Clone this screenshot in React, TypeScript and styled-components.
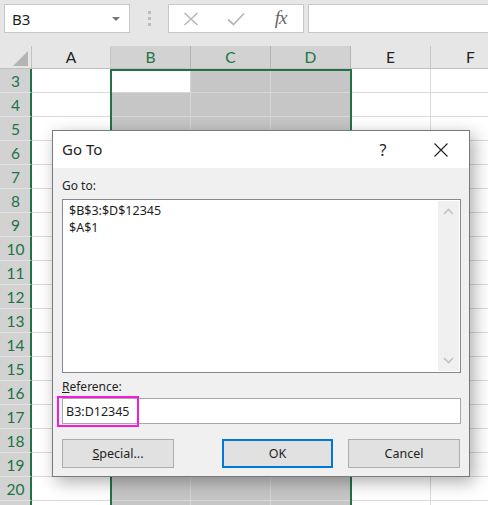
import React from 'react'
import styled, { createGlobalStyle } from 'styled-components'

const GREEN = '#217346'

const GlobalStyle = createGlobalStyle`
  html, body {
    margin: 0;
    padding: 0;
    background: #fff;
    overflow: hidden;
  }
  * {
    box-sizing: border-box;
  }
`

const Page = styled.div`
  position: relative;
  width: 488px;
  height: 505px;
  overflow: hidden;
  background: #fff;
  font-family: 'Noto Sans', 'Liberation Sans', sans-serif;
  color: #1e1e1e;
`

// ---- formula bar ----

const FormulaBar = styled.div`
  display: flex;
  align-items: flex-start;
  height: 46px;
  padding: 4px 0 0 4px;
  background: #e6e6e6;
`

const NameBox = styled.div`
  width: 126px;
  height: 29px;
  flex: none;
  display: flex;
  align-items: center;
  justify-content: space-between;
  padding: 0 9px 0 7px;
  background: #fff;
  border: 1px solid #c8c8c8;
  font-size: 15px;
`

const Caret = styled.span`
  width: 0;
  height: 0;
  border-left: 4px solid transparent;
  border-right: 4px solid transparent;
  border-top: 4px solid #777;
`

const Grip = styled.div`
  width: 38px;
  height: 29px;
  flex: none;
  display: flex;
  flex-direction: column;
  align-items: center;
  justify-content: center;
  gap: 3px;
`

const GripDot = styled.span`
  width: 3px;
  height: 3px;
  background: #bcbcbc;
`

const FxBox = styled.div`
  width: 136px;
  height: 29px;
  flex: none;
  display: flex;
  align-items: center;
  background: #fff;
  border: 1px solid #c8c8c8;
`

const FxSlot = styled.div`
  width: 45px;
  height: 100%;
  display: flex;
  align-items: center;
  justify-content: center;
`

const FxText = styled.span`
  font-family: 'Liberation Serif', 'DejaVu Serif', serif;
  font-style: italic;
  font-size: 19px;
  color: #666;
  letter-spacing: -1px;
  margin-top: -2px;
`

const FormulaInput = styled.div`
  flex: 1;
  height: 29px;
  margin: 0 -10px 0 4px;
  background: #fff;
  border: 1px solid #c8c8c8;
`

// ---- sheet ----

const columns = [
  { key: 'A', width: 79 },
  { key: 'B', width: 80 },
  { key: 'C', width: 80 },
  { key: 'D', width: 80 },
  { key: 'E', width: 80 },
  { key: 'F', width: 80 },
]
const selectedCols = ['B', 'C', 'D']
// rows 3..20 are labelled; the last one only peeks in at the bottom edge
const rows = Array.from({ length: 19 }, (_, i) => i + 3)
const lastRow = 20

const SheetWrap = styled.div`
  position: relative;
`

const Sheet = styled.div<{ $template: string }>`
  display: grid;
  grid-template-columns: ${({ $template }) => $template};
  grid-auto-rows: 24px;
  grid-template-rows: 23px;
  font-family: Lato, 'Liberation Sans', sans-serif;
  font-size: 15.5px;
`

const Corner = styled.div`
  background: #e6e6e6;
  border-right: 1px solid #c0c0c0;
  border-bottom: 1px solid #c0c0c0;
  display: flex;
  align-items: flex-end;
  justify-content: flex-end;
  padding: 0 3px 2px 0;
`

const ColHeader = styled.div<{ $sel?: boolean }>`
  display: flex;
  align-items: center;
  justify-content: center;
  background: ${({ $sel }) => ($sel ? '#d2d2d2' : '#e6e6e6')};
  color: ${({ $sel }) => ($sel ? GREEN : '#222')};
  border-right: 1px solid ${({ $sel }) => ($sel ? '#b4b4b4' : '#c8c8c8')};
  border-bottom: 1px solid #c0c0c0;
`

const RowHeader = styled.div<{ $sel?: boolean }>`
  display: flex;
  align-items: center;
  justify-content: center;
  background: ${({ $sel }) => ($sel ? '#d2d2d2' : '#e6e6e6')};
  color: ${({ $sel }) => ($sel ? GREEN : '#222')};
  border-right: 2px solid ${({ $sel }) => ($sel ? GREEN : '#c0c0c0')};
  border-bottom: 1px solid #e4e4e4;
  padding-left: 1px;
`

const Cell = styled.div<{ $sel?: boolean; $active?: boolean }>`
  background: ${({ $sel, $active }) => ($active ? '#fff' : $sel ? '#c6c6c6' : '#fff')};
  border-right: 1px solid ${({ $sel }) => ($sel ? '#d6d6d6' : '#dadada')};
  border-bottom: 1px solid ${({ $sel }) => ($sel ? '#d6d6d6' : '#dadada')};
`

const SelectionOutline = styled.div`
  position: absolute;
  left: 110px;
  top: 23px;
  width: 242px;
  height: 600px;
  border: 2px solid ${GREEN};
  border-bottom: none;
  pointer-events: none;
`

// ---- dialog ----

const Dialog = styled.div`
  position: absolute;
  left: 52px;
  top: 130px;
  width: 418px;
  height: 347px;
  display: flex;
  flex-direction: column;
  background: #f0f0f0;
  border: 1px solid #7a7a7a;
  box-shadow: 4px 5px 16px rgba(0, 0, 0, 0.32);
  font-size: 12px;
`

const TitleBar = styled.div`
  height: 37px;
  flex: none;
  display: flex;
  align-items: center;
  padding: 0 5px 0 9px;
  background: #fff;
`

const Title = styled.div`
  flex: 1;
  font-size: 15px;
  margin-top: -1px;
`

const TitleButton = styled.div<{ $w: number }>`
  width: ${({ $w }) => $w}px;
  height: 30px;
  display: flex;
  align-items: center;
  justify-content: center;
  font-size: 16px;
  color: #222;
`

const Body = styled.div`
  flex: 1;
  display: flex;
  flex-direction: column;
  padding: 10px 8px 0 9px;
`

const Label = styled.div<{ $gap?: number }>`
  height: 16px;
  line-height: 16px;
  margin-top: ${({ $gap }) => $gap ?? 0}px;
`

const ListBox = styled.div`
  height: 174px;
  margin-top: 5px;
  display: flex;
  padding: 1px;
  background: #fff;
  border: 1px solid #828790;
`

const ListItems = styled.div`
  flex: 1;
  padding: 1px 5px;
  font-size: 12.5px;
  line-height: 17px;
`

const ScrollBar = styled.div`
  width: 21px;
  display: flex;
  flex-direction: column;
  justify-content: space-between;
  background: #f0f0f0;
`

const ScrollArrow = styled.div`
  height: 21px;
  display: flex;
  align-items: center;
  justify-content: center;
`

const FieldWrap = styled.div`
  position: relative;
  margin-top: 3px;
`

const Field = styled.div`
  height: 26px;
  display: flex;
  align-items: center;
  padding-left: 3px;
  background: #fff;
  border: 1px solid #a8a8a8;
  font-size: 12.5px;
`

const Highlight = styled.div`
  position: absolute;
  left: -5px;
  top: -2px;
  width: 82px;
  height: 31px;
  border: 2px solid #f41bdc;
  pointer-events: none;
`

const ButtonRow = styled.div`
  display: flex;
  margin-top: 15px;
  padding-right: 1px;
`

const Button = styled.div<{ $primary?: boolean; $w: number }>`
  width: ${({ $w }) => $w}px;
  height: 29px;
  display: flex;
  align-items: center;
  justify-content: center;
  background: #e1e1e1;
  border: ${({ $primary }) => ($primary ? '2px solid #0078d7' : '1px solid #adadad')};
  font-size: 12.5px;
`

const Spacer = styled.div<{ $w?: number }>`
  ${({ $w }) => ($w ? `width: ${$w}px;` : 'flex: 1;')}
`

const Chevron = ({ up }: { up?: boolean }) => (
  <svg width="11" height="7" viewBox="0 0 11 7">
    <polyline
      points={up ? '1,6 5.5,1.5 10,6' : '1,1 5.5,5.5 10,1'}
      fill="none"
      stroke="#c2c2c2"
      strokeWidth="1.6"
    />
  </svg>
)

export default function App() {
  const template = ['32px', ...columns.map((c) => `${c.width}px`)].join(' ')
  return (
    <Page>
      <GlobalStyle />
      <FormulaBar>
        <NameBox>
          B3
          <Caret />
        </NameBox>
        <Grip>
          <GripDot />
          <GripDot />
          <GripDot />
        </Grip>
        <FxBox>
          <FxSlot>
            <svg width="16" height="14" viewBox="0 0 16 14">
              <path d="M1.5 1 L14.5 13 M14.5 1 L1.5 13" stroke="#b8b8b8" strokeWidth="1.6" fill="none" />
            </svg>
          </FxSlot>
          <FxSlot>
            <svg width="18" height="14" viewBox="0 0 18 14">
              <polyline points="1,7.5 6.5,12.5 17,1.5" stroke="#b8b8b8" strokeWidth="1.8" fill="none" />
            </svg>
          </FxSlot>
          <FxSlot>
            <FxText>fx</FxText>
          </FxSlot>
        </FxBox>
        <FormulaInput />
      </FormulaBar>

      <SheetWrap>
        <Sheet $template={template}>
          <Corner>
            <svg width="15" height="15" viewBox="0 0 15 15">
              <polygon points="15,0 15,15 0,15" fill="#b4b4b4" />
            </svg>
          </Corner>
          {columns.map((c) => (
            <ColHeader key={c.key} $sel={selectedCols.includes(c.key)}>
              {c.key}
            </ColHeader>
          ))}
          {rows.map((r) => (
            <React.Fragment key={r}>
              <RowHeader $sel>{r <= lastRow ? r : ''}</RowHeader>
              {columns.map((c) => (
                <Cell
                  key={c.key}
                  $sel={selectedCols.includes(c.key)}
                  $active={c.key === 'B' && r === 3}
                />
              ))}
            </React.Fragment>
          ))}
        </Sheet>
        <SelectionOutline />
      </SheetWrap>

      <Dialog>
        <TitleBar>
          <Title>Go To</Title>
          <TitleButton $w={30}>?</TitleButton>
          <Spacer $w={20} />
          <TitleButton $w={46}>
            <svg width="14" height="14" viewBox="0 0 14 14">
              <path d="M0.5 0.5 L13.5 13.5 M13.5 0.5 L0.5 13.5" stroke="#222" strokeWidth="1.1" fill="none" />
            </svg>
          </TitleButton>
        </TitleBar>
        <Body>
          <Label>Go to:</Label>
          <ListBox>
            <ListItems>
              <div>$B$3:$D$12345</div>
              <div>$A$1</div>
            </ListItems>
            <ScrollBar>
              <ScrollArrow>
                <Chevron up />
              </ScrollArrow>
              <ScrollArrow>
                <Chevron />
              </ScrollArrow>
            </ScrollBar>
          </ListBox>
          <Label $gap={6}>
            <u>R</u>eference:
          </Label>
          <FieldWrap>
            <Field>B3:D12345</Field>
            <Highlight />
          </FieldWrap>
          <ButtonRow>
            <Button $w={112}>
              <span>
                <u>S</u>pecial...
              </span>
            </Button>
            <Spacer />
            <Button $w={111} $primary>
              OK
            </Button>
            <Spacer $w={15} />
            <Button $w={112}>Cancel</Button>
          </ButtonRow>
        </Body>
      </Dialog>
    </Page>
  )
}
